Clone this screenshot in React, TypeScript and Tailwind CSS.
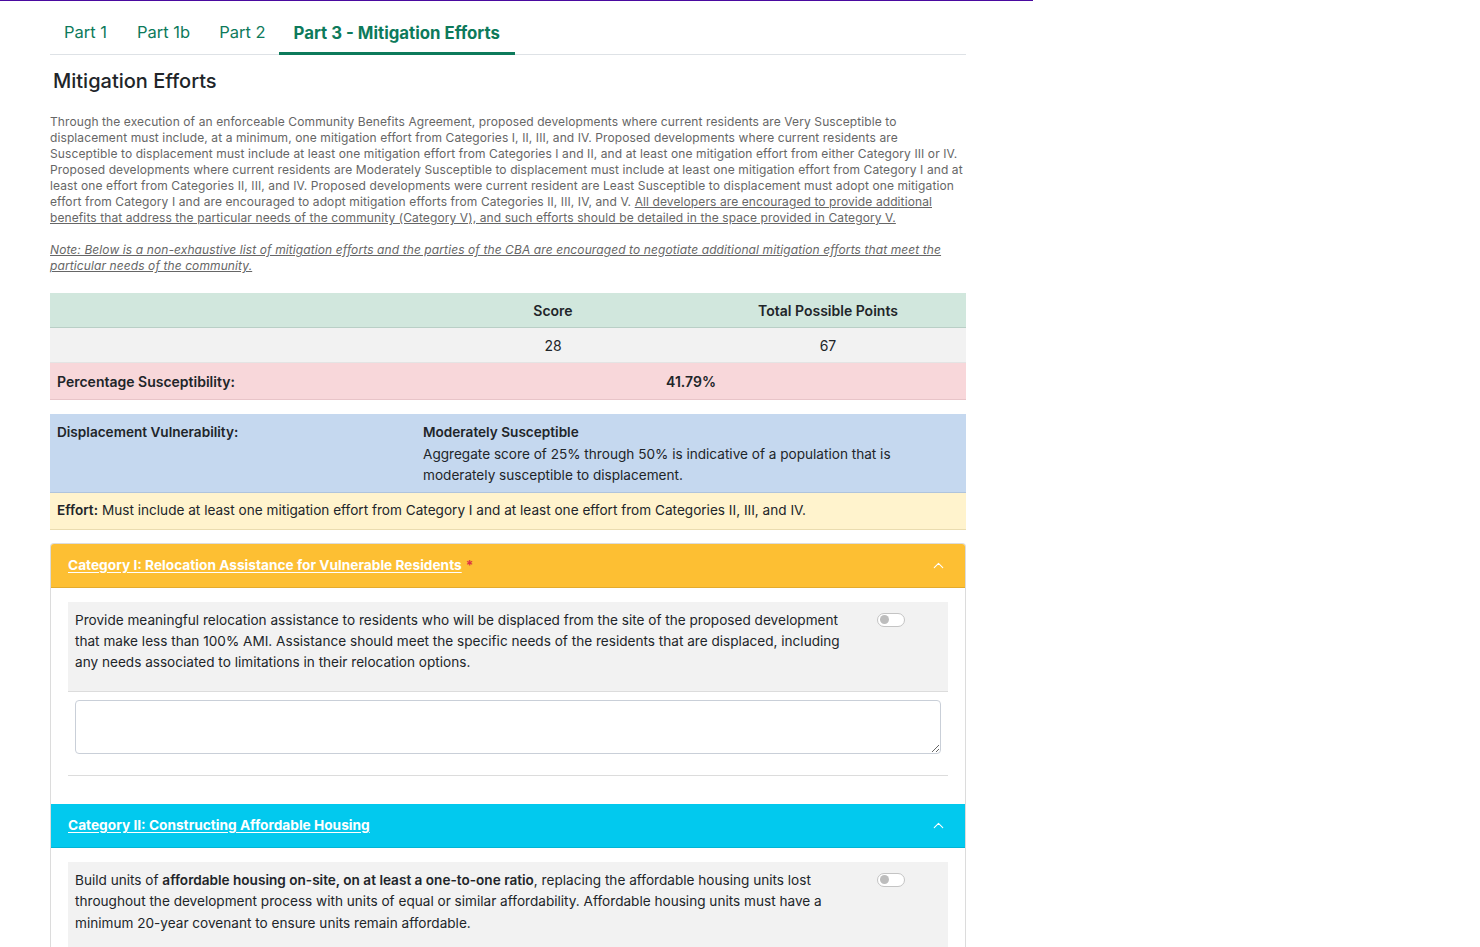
import { ChevronUp } from "lucide-react";

function Toggle() {
  return (
    <div className="mt-[3px] flex h-[14px] w-[28px] shrink-0 items-center rounded-full border border-[#c4c4c4] bg-white px-[2px]">
      <div className="h-[9px] w-[9px] rounded-full bg-[#bdbdbd]" />
    </div>
  );
}

function CategoryHeader({ title, color, required }: { title: string; color: string; required?: boolean }) {
  return (
    <div className={`flex h-[44px] items-center justify-between border-b border-black/10 pl-[17px] pr-[18px] ${color}`}>
      <div className="text-[13.7px] font-bold text-white">
        <span className="underline underline-offset-2">{title}</span>
        {required ? <span className="ml-1 text-[#dc3545]">*</span> : null}
      </div>
      <ChevronUp className="h-[17px] w-[17px] text-white" strokeWidth={1.5} />
    </div>
  );
}

export default function App() {
  return (
    <div className="min-h-[947px] bg-white font-['Inter',sans-serif] text-[#212529]">
      <div className="h-px w-[1033px] bg-[#4a0aa0]" />
      <div className="ml-[50px] w-[916px]">
        <div className="flex h-[54px] items-end border-b border-[#dee2e6] pl-[14px]">
          <div className="mr-[30px] pb-[9px] text-[16.5px] text-[#0d7a5b]">Part 1</div>
          <div className="mr-[29px] pb-[9px] text-[16.5px] text-[#0d7a5b]">Part 1b</div>
          <div className="mr-[28px] pb-[9px] text-[16.5px] text-[#0d7a5b]">Part 2</div>
          <div className="-ml-[15px] -mb-px border-b-[3px] border-[#0d7a5b] px-[15px] pb-[6px] text-[16.8px] font-bold text-[#0d7a5b]">
            Part 3 - Mitigation Efforts
          </div>
        </div>

        <h2 className="mt-[13px] pl-[3px] text-[20px] font-medium leading-[26px] text-[#212529]">
          Mitigation Efforts
        </h2>

        <p className="mt-[20px] text-[12px] tracking-[0.1px] leading-[16px] text-[#666]">
          Through the execution of an enforceable Community Benefits Agreement, proposed developments where current
          residents are Very Susceptible to displacement must include, at a minimum, one mitigation effort from
          Categories I, II, III, and IV. Proposed developments where current residents are Susceptible to displacement
          must include at least one mitigation effort from Categories I and II, and at least one mitigation effort from
          either Category III or IV. Proposed developments where current residents are Moderately Susceptible to
          displacement must include at least one mitigation effort from Category I and at least one effort from
          Categories II, III, and IV. Proposed developments were current resident are Least Susceptible to displacement
          must adopt one mitigation effort from Category I and are encouraged to adopt mitigation efforts from
          Categories II, III, IV, and V.{" "}
          <span className="underline">
            All developers are encouraged to provide additional benefits that address the particular needs of the
            community (Category V), and such efforts should be detailed in the space provided in Category V.
          </span>
        </p>
        <p className="mt-[16px] text-[12px] tracking-[0.1px] italic leading-[16px] text-[#666] underline">
          Note: Below is a non-exhaustive list of mitigation efforts and the parties of the CBA are encouraged to
          negotiate additional mitigation efforts that meet the particular needs of the community.
        </p>

        <div className="mt-[19px] text-[14px]">
          <div className="grid h-[35px] grid-cols-[366px_274px_276px] items-center border-b border-[#b9cfc6] bg-[#d1e7dd] font-semibold">
            <div />
            <div className="text-center">Score</div>
            <div className="text-center">Total Possible Points</div>
          </div>
          <div className="grid h-[35px] grid-cols-[366px_274px_276px] items-center border-b border-[#e4e4e4] bg-[#f2f2f2]">
            <div />
            <div className="text-center">28</div>
            <div className="text-center">67</div>
          </div>
          <div className="grid h-[37px] grid-cols-[366px_550px] items-center border-b border-[#e8c4c8] bg-[#f8d7da] font-semibold">
            <div className="pl-[7px]">Percentage Susceptibility:</div>
            <div className="text-center">41.79%</div>
          </div>
        </div>

        <div className="mt-[14px] text-[13.6px]">
          <div className="grid grid-cols-[366px_550px] border-b border-[#b0c4dc] bg-[#c5d8ef] pb-[5px] pt-[8px] leading-[21.5px]">
            <div className="pl-[7px] font-semibold">Displacement Vulnerability:</div>
            <div className="pl-[7px] pr-[60px]">
              <div className="font-semibold">Moderately Susceptible</div>
              <div>
                Aggregate score of 25% through 50% is indicative of a population that is moderately susceptible to
                displacement.
              </div>
            </div>
          </div>
          <div className="flex h-[37px] items-center border-b border-[#eadcb0] bg-[#fff3cd] pl-[7px]">
            <span className="font-semibold">Effort:</span>
            <span className="ml-1">
              Must include at least one mitigation effort from Category I and at least one effort from Categories II,
              III, and IV.
            </span>
          </div>
        </div>

        <div className="mt-[13px] overflow-hidden rounded-t-[4px] border border-b-0 border-[#dcdcdc]">
          <CategoryHeader title="Category I: Relocation Assistance for Vulnerable Residents" color="bg-[#fdbf33]" required />
          <div className="px-[17px] pt-[14px] pb-[28px]">
            <div className="flex justify-between border-b border-[#dcdcdc] bg-[#f2f2f2] pl-[7px] pr-[43px] pt-[8px] pb-[18px] text-[13.6px] leading-[21px]">
              <div className="w-[786px]">
                Provide meaningful relocation assistance to residents who will be displaced from the site of the proposed
                development that make less than 100% AMI. Assistance should meet the specific needs of the residents
                that are displaced, including any needs associated to limitations in their relocation options.
              </div>
              <Toggle />
            </div>
            <div className="px-[7px] pt-[8px]">
              <textarea className="block h-[54px] w-full resize-y rounded-[4px] border border-[#c9cfd8] bg-white" />
            </div>
            <div className="mt-[21px] border-b border-[#dcdcdc]" />
          </div>
          <CategoryHeader title="Category II: Constructing Affordable Housing" color="bg-[#02c9ee]" />
          <div className="px-[17px] pt-[14px]">
            <div className="flex h-[90px] justify-between bg-[#f2f2f2] pl-[7px] pr-[43px] pt-[8px] text-[13.6px] leading-[21.5px]">
              <div className="w-[786px]">
                Build units of <span className="font-semibold">affordable housing on-site, on at least a one-to-one ratio</span>,
                replacing the affordable housing units lost throughout the development process with units of equal or
                similar affordability. Affordable housing units must have a minimum 20-year covenant to ensure units
                remain affordable.
              </div>
              <Toggle />
            </div>
          </div>
        </div>
      </div>
    </div>
  );
}
